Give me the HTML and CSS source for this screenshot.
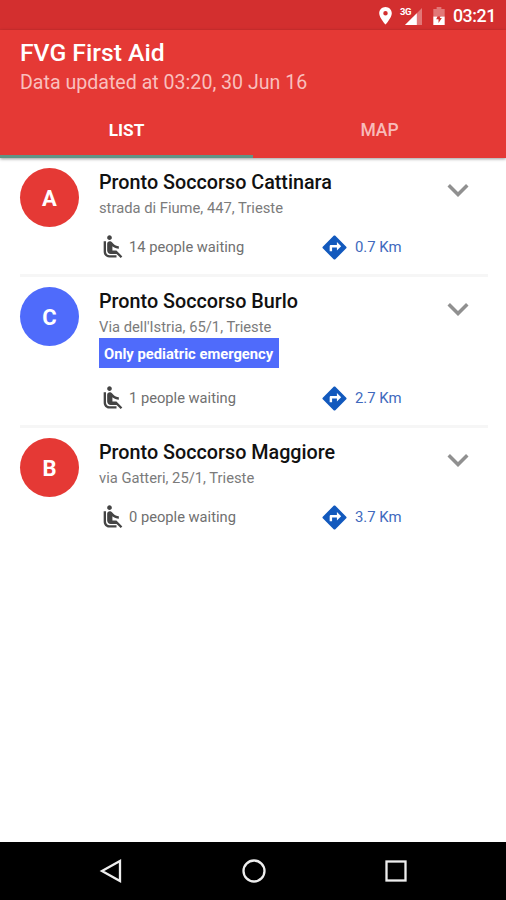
FILE: index.html
```html
<!DOCTYPE html>
<html lang="en">
<head>
<meta charset="utf-8">
<title>FVG First Aid</title>
<link rel="stylesheet" href="styles.css">
</head>
<body>
<svg class="defs" aria-hidden="true">
  <symbol id="seat" viewBox="0 0 24 24"><path d="M7.59 5.41c-.78-.78-.78-2.05 0-2.83.78-.78 2.05-.78 2.83 0 .78.78.78 2.05 0 2.83-.79.79-2.05.79-2.83 0zM6 16V7H4v9c0 2.76 2.24 5 5 5h6v-2H9c-1.66 0-3-1.34-3-3zm14 4.07L14.93 15H11.5v-3.68c1.4 1.15 3.6 2.16 5.5 2.16v-2.16c-1.66.02-3.61-.87-4.67-2.04l-1.4-1.55c-.19-.21-.43-.38-.69-.5-.29-.14-.62-.23-.96-.23h-.03C8.01 7 7 8.01 7 9.25V15c0 1.66 1.34 3 3 3h5.07l3.5 3.5L20 20.07z"/></symbol>
  <symbol id="directions" viewBox="0 0 24 24"><path d="M21.71 11.29l-9-9c-.39-.39-1.02-.39-1.41 0l-9 9c-.39.39-.39 1.02 0 1.41l9 9c.39.39 1.02.39 1.41 0l9-9c.39-.38.39-1.01 0-1.41zM14 14.5V12h-4v3H8v-4c0-.55.45-1 1-1h5V7.5l3.5 3.5-3.5 3.5z"/></symbol>
  <symbol id="chevron" viewBox="0 0 24 24"><path d="M16.59 8.59L12 13.17 7.41 8.59 6 10l6 6 6-6z"/></symbol>
</svg>
<div class="status">
  <svg class="pin" viewBox="0 0 14 20"><path fill-rule="evenodd" d="M7 0C3.1 0 0 3.1 0 7c0 5 7 12.500 7 12.500S14 12 14 7c0-3.900-3.100-7-7-7zm0 9.500a2.500 2.500 0 1 1 0-5 2.500 2.500 0 0 1 0 5z"/></svg>
  <span class="signal"><b>3G</b><svg viewBox="0 0 18 18"><path opacity=".35" d="M0 18L18 0v18z"/><path d="M0 18L12.500 5.500V18z"/></svg></span>
  <svg class="battery" viewBox="0 0 12 19"><path opacity=".35" d="M3.500 2V0h5v2H12v8H0V2z"/><path fill-rule="evenodd" d="M0 10h4.500L3 13h2.500v4L9 11.500H6.800L7.500 10H12v9H0z"/></svg>
  <span class="clock">03:21</span>
</div>
<header>
  <h1>FVG First Aid</h1>
  <p class="updated">Data updated at 03:20, 30 Jun 16</p>
  <nav><a class="tab active">LIST</a><a class="tab">MAP</a></nav>
</header>
<main>
  <article class="row">
    <div class="badge">A</div>
    <div class="info">
      <h2>Pronto Soccorso Cattinara</h2>
      <p class="address">strada di Fiume, 447, Trieste</p>
      <div class="meta"><svg class="seat"><use href="#seat"/></svg><span class="waiting">14 people waiting</span><svg class="dir"><use href="#directions"/></svg><span class="km">0.7 Km</span></div>
    </div>
    <svg class="chevron"><use href="#chevron"/></svg>
  </article>
  <article class="row">
    <div class="badge blue">C</div>
    <div class="info">
      <h2>Pronto Soccorso Burlo</h2>
      <p class="address">Via dell'Istria, 65/1, Trieste</p>
      <p class="tag">Only pediatric emergency</p>
      <div class="meta"><svg class="seat"><use href="#seat"/></svg><span class="waiting">1 people waiting</span><svg class="dir"><use href="#directions"/></svg><span class="km">2.7 Km</span></div>
    </div>
    <svg class="chevron"><use href="#chevron"/></svg>
  </article>
  <article class="row">
    <div class="badge">B</div>
    <div class="info">
      <h2>Pronto Soccorso Maggiore</h2>
      <p class="address">via Gatteri, 25/1, Trieste</p>
      <div class="meta"><svg class="seat"><use href="#seat"/></svg><span class="waiting">0 people waiting</span><svg class="dir"><use href="#directions"/></svg><span class="km">3.7 Km</span></div>
    </div>
    <svg class="chevron"><use href="#chevron"/></svg>
  </article>
</main>
<footer>
  <svg viewBox="0 0 26 26"><path d="M3 13L21 3v20z"/></svg>
  <svg viewBox="0 0 26 26"><circle cx="13" cy="13" r="10.500"/></svg>
  <svg viewBox="0 0 26 26"><rect x="3.500" y="3.500" width="19" height="19"/></svg>
</footer>
</body>
</html>
```
FILE: styles.css
```css
* { box-sizing: border-box; }
body {
  margin: 0;
  height: 900px;
  display: flex;
  flex-direction: column;
  background: #fff;
  font-family: Roboto, sans-serif;
  overflow: hidden;
}
h1, h2, p { margin: 0; white-space: nowrap; }
.defs { display: none; }
.status {
  height: 30px;
  flex: none;
  display: flex;
  align-items: center;
  justify-content: flex-end;
  padding: 2px 10px 0 0;
  background: #d32f2f;
  color: #fff;
  fill: #fff;
}
.pin { width: 13px; height: 18px; margin-right: 8px; }
.signal { display: flex; width: 22px; height: 19px; align-items: flex-end; margin-right: 11px; padding-bottom: 1px; }
.signal b { font-size: 9.5px; line-height: 9px; width: 5px; align-self: flex-start; letter-spacing: -0.3px; }
.signal svg { width: 17px; height: 17px; flex: none; }
.battery { width: 12px; height: 18px; margin-right: 8px; }
.clock { font-size: 17.8px; font-weight: 500; line-height: 24px; letter-spacing: -0.4px; }
header {
  height: 128px;
  flex: none;
  display: flex;
  flex-direction: column;
  background: #e53935;
  color: #fff;
  box-shadow: 0 1px 3px rgba(0, 0, 0, .4);
}
h1 { font-size: 24.7px; line-height: 30px; font-weight: 500; padding: 8px 20px 0; }
.updated { font-size: 19.6px; line-height: 24px; padding: 3px 20px 0; color: #f9bfbd; }
nav { display: flex; flex: 1; }
.tab {
  flex: 1;
  text-align: center;
  font-size: 17.5px;
  font-weight: 500;
  line-height: 20px;
  padding-top: 25px;
  color: #f8bbb9;
}
.active { color: #fff; font-weight: 700; font-size: 17.2px; border-bottom: 3px solid #609485; }
main { flex: 1; padding: 0 18px 0 20px; }
.row {
  display: flex;
  align-items: flex-start;
  padding-top: 10px;
  height: 119px;
  border-bottom: 3px solid #f6f6f6;
}
.row:nth-child(2) { height: 151px; }
.row:last-child { border: 0; }
.badge {
  width: 59px;
  height: 59px;
  border-radius: 50%;
  background: #e53935;
  color: #fff;
  font-size: 22px;
  font-weight: 700;
  line-height: 61px;
  text-align: center;
}
.blue { background: #4f6bfb; }
.info { width: 340px; margin-left: 20px; }
h2 { font-size: 19.75px; line-height: 24px; font-weight: 500; color: #111; padding-top: 3px; }
.address { font-size: 14.75px; line-height: 20px; padding-top: 3px; color: #7b7b7b; }
.tag {
  width: 180px;
  height: 30px;
  margin: 1px 0 0;
  padding-left: 5px;
  background: #4f6bfb;
  color: #fff;
  font-size: 14.75px;
  font-weight: 700;
  line-height: 32px;
}
.meta { display: flex; align-items: center; height: 30px; margin-top: 14px; }
.tag + .meta { margin-top: 15px; }
.seat { width: 28px; height: 28px; fill: #444; flex: none; }
.waiting { width: 191px; margin-left: 2px; font-size: 14.7px; color: #707070; }
.dir { width: 29px; height: 29px; fill: #1259bd; flex: none; }
.km { margin-left: 6px; font-size: 14.9px; color: #4069bd; white-space: nowrap; }
.chevron { width: 42px; height: 42px; margin: 1px 0 0 -2px; fill: #909090; flex: none; }
footer {
  height: 58px;
  flex: none;
  display: flex;
  align-items: center;
  justify-content: center;
  gap: 116px;
  padding-left: 2px;
  background: #000;
  fill: none;
  stroke: #eee;
  stroke-width: 2.3;
}
footer svg { width: 26px; height: 26px; }
```
